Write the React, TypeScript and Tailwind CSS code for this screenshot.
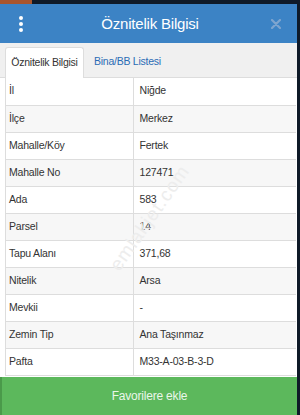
import React from 'react';

const rows: [string, string][] = [
    ['İl', 'Niğde'],
    ['İlçe', 'Merkez'],
    ['Mahalle/Köy', 'Fertek'],
    ['Mahalle No', '127471'],
    ['Ada', '583'],
    ['Parsel', '14'],
    ['Tapu Alanı', '371,68'],
    ['Nitelik', 'Arsa'],
    ['Mevkii', '-'],
    ['Zemin Tip', 'Ana Taşınmaz'],
    ['Pafta', 'M33-A-03-B-3-D'],
];

const App: React.FC = () => {
    return (
        <div className="w-[300px] h-[415px] bg-[#0f1a28] flex flex-col overflow-hidden font-['Liberation_Sans',Arial,sans-serif]">
            {/* page behind the modal */}
            <div className="h-[4px] flex shrink-0">
                <div className="w-[32px] bg-[#a9552d]" />
                <div className="flex-1 bg-[#0f1a28]" />
            </div>
            <div className="flex-1 flex pr-[3px]">
                <div className="flex-1 bg-white flex flex-col relative overflow-hidden">
                    <div className="h-[39px] bg-[#3c83c5] flex items-center px-[18px] shrink-0">
                        <div className="flex flex-col gap-[2px] w-[5px] items-center">
                            <span className="w-[4px] h-[4px] rounded-full bg-white" />
                            <span className="w-[4px] h-[4px] rounded-full bg-white" />
                            <span className="w-[4px] h-[4px] rounded-full bg-white" />
                        </div>
                        <div className="flex-1 text-center text-white text-[15px] tracking-[-0.2px] leading-none pl-[6px]">Öznitelik Bilgisi</div>
                        <svg width="10" height="10" viewBox="0 0 10 10" className="mr-[-2px]">
                            <path d="M1 1 L9 9 M9 1 L1 9" stroke="#7ea5cf" strokeWidth="2.2" strokeLinecap="round" />
                        </svg>
                    </div>
                    <div className="h-[35px] bg-[#f0f0f0] flex items-end pl-[5px] shrink-0 border-b border-[#dddddd]">
                        <div className="w-[79px] h-[31px] bg-white border border-[#dddddd] border-b-0 rounded-t-[3px] flex items-center justify-center text-[10.5px] tracking-[-0.25px] text-[#333333] mb-[-1px]">
                            Öznitelik Bilgisi
                        </div>
                        <div className="h-[31px] px-[10px] flex items-center text-[10.5px] tracking-[-0.25px] text-[#2b6cb5]">Bina/BB Listesi</div>
                    </div>
                    <div className="ml-[5px] mr-[1px] border-l border-[#dddddd]">
                        <table className="w-full border-collapse text-[10.5px] tracking-[-0.2px] text-[#333333]">
                            <tbody>
                                {rows.map(([label, value], i) => (
                                    <tr key={label} className={`h-[27px] border-b border-[#dddddd] ${i % 2 === 1 ? 'bg-[#f7f7f7]' : 'bg-white'}`}>
                                        <td className="w-[127px] pl-[3px] border-r border-[#dddddd]">{label}</td>
                                        <td className="pl-[6px]">{value}</td>
                                    </tr>
                                ))}
                            </tbody>
                        </table>
                    </div>
                    <div className="absolute left-[88px] top-[200px] -rotate-[55deg] text-[19px] text-[#ededed] pointer-events-none tracking-[1px]">
                        emlakjet.com
                    </div>
                    <div className="mt-auto h-[38px] bg-[#5cb85c] flex items-center justify-center text-[12px] tracking-[-0.2px] text-[#eaf6ea] border-l-2 border-[#4a9a4a]">
                        Favorilere ekle
                    </div>
                </div>
            </div>
        </div>
    );
};

export default App;
